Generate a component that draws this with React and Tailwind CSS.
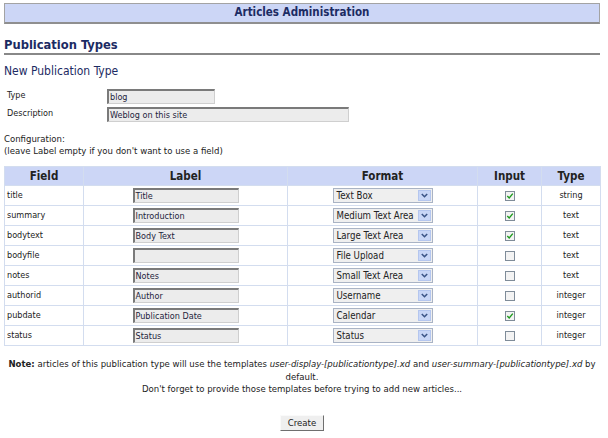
import React from 'react';

const rows = [
  ['title', 'Title', 'Text Box', true, 'string'],
  ['summary', 'Introduction', 'Medium Text Area', true, 'text'],
  ['bodytext', 'Body Text', 'Large Text Area', true, 'text'],
  ['bodyfile', '', 'File Upload', false, 'text'],
  ['notes', 'Notes', 'Small Text Area', false, 'text'],
  ['authorid', 'Author', 'Username', false, 'integer'],
  ['pubdate', 'Publication Date', 'Calendar', true, 'integer'],
  ['status', 'Status', 'Status', false, 'integer'],
];

function TextBox({ value, w }) {
  return (
    <div
      className={`${w} h-[15px] bg-[#ececec] border-t-2 border-l-2 border-b border-r border-t-[#7a7a7a] border-l-[#7a7a7a] border-b-[#cfcfcf] border-r-[#cfcfcf] pl-[1px] leading-[12px] text-left text-[#1e1e3c] whitespace-nowrap overflow-hidden`}
    >
      {value}
    </div>
  );
}

function SelectBox({ value }) {
  return (
    <div className="mx-auto w-[100px] h-[15px] flex items-stretch bg-[#efefef] border border-[#a9b3c4] text-left">
      <span className="flex-1 pl-[3px] leading-[13px] text-[9.6px] text-[#222] whitespace-nowrap overflow-hidden">{value}</span>
      <span className="w-[13px] m-[1px] flex items-center justify-center bg-[#c9d7f7] border border-[#b4c6ef]">
        <svg width="7" height="5" viewBox="0 0 7 5">
          <path d="M0.8 1 L3.5 3.7 L6.2 1" fill="none" stroke="#3d5687" strokeWidth="1.6" />
        </svg>
      </span>
    </div>
  );
}

function Check({ on }) {
  return (
    <span className="mx-auto w-[10px] h-[10px] flex items-center justify-center border border-[#7f8c99] bg-[#f3f3f3]">
      {on && (
        <svg width="8" height="8" viewBox="0 0 8 8">
          <path d="M1.3 4 L3.2 6 L6.8 1.6" fill="none" stroke="#1f9a1f" strokeWidth="1.4" />
        </svg>
      )}
    </span>
  );
}

export default function App() {
  const font = { fontFamily: '"DejaVu Sans Condensed", "Liberation Sans", sans-serif' };
  return (
    <div className="w-[608px] h-[438px] bg-white text-[9px] text-[#222] pt-[3px]" style={font}>
      <div className="ml-[4px] w-[596px]">
        <div className="h-[21px] flex items-center justify-center bg-[#ccd6f6] border-t border-t-[#a3a3a3] border-b-2 border-b-[#8f8f8f] border-x border-x-[#a3a3a3] text-[11.5px] font-bold text-[#1c2b63]">
          Articles Administration
        </div>

        <div className="mt-[13px] h-[18px] leading-[16px] text-[12.8px] font-bold text-[#1c2b63] border-b-2 border-[#888]">
          Publication Types
        </div>

        <div className="mt-[9px] leading-[14px] text-[12px] text-[#1c2b63]">New Publication Type</div>

        <div className="mt-[10px] flex flex-col gap-[2px]">
          <div className="flex items-center h-[16px]">
            <span className="w-[103px] pl-[3px]">Type</span>
            <TextBox value="blog" w="w-[108px]" />
          </div>
          <div className="flex items-center h-[16px]">
            <span className="w-[103px] pl-[3px]">Description</span>
            <TextBox value="Weblog on this site" w="w-[242px]" />
          </div>
        </div>

        <div className="mt-[11px] leading-[12px] text-[9.5px]">
          <div>Configuration:</div>
          <div>(leave Label empty if you don't want to use a field)</div>
        </div>

        <table className="mt-[9px] w-[596px] border-collapse table-fixed">
          <colgroup>
            <col className="w-[79px]" />
            <col className="w-[204px]" />
            <col className="w-[190px]" />
            <col className="w-[64px]" />
            <col className="w-[59px]" />
          </colgroup>
          <thead>
            <tr className="h-[19px] bg-[#ccd6f6] text-[11.5px] font-bold text-[#222]">
              <th className="border border-[#d3ddef] font-bold pt-[1px]">Field</th>
              <th className="border border-[#d3ddef] font-bold pt-[1px]">Label</th>
              <th className="border border-[#d3ddef] font-bold pt-[1px]">Format</th>
              <th className="border border-[#d3ddef] font-bold pt-[1px]">Input</th>
              <th className="border border-[#d3ddef] font-bold pt-[1px]">Type</th>
            </tr>
          </thead>
          <tbody>
            {rows.map(([field, label, format, input, type]) => (
              <tr key={field} className="h-[20px]">
                <td className="border border-[#d3ddef] pl-[2px]">{field}</td>
                <td className="border border-[#d3ddef]">
                  <div className="flex justify-center">
                    <TextBox value={label} w="w-[106px]" />
                  </div>
                </td>
                <td className="border border-[#d3ddef]">
                  <SelectBox value={format} />
                </td>
                <td className="border border-[#d3ddef]">
                  <Check on={input} />
                </td>
                <td className="border border-[#d3ddef] text-center">{type}</td>
              </tr>
            ))}
          </tbody>
        </table>

        <div className="mt-[12px] leading-[12.5px] text-center text-[9.5px]">
          <div className="whitespace-nowrap">
            <b>Note:</b> articles of this publication type will use the templates{' '}
            <i>user-display-[publicationtype].xd</i> and <i>user-summary-[publicationtype].xd</i> by
          </div>
          <div>default.</div>
          <div>Don't forget to provide those templates before trying to add new articles...</div>
        </div>

        <div className="mt-[19px] flex justify-center">
          <button className="w-[44px] h-[16px] bg-[#efefef] border border-t-[#fafafa] border-l-[#fafafa] border-b-[#6f6f6f] border-r-[#6f6f6f] text-[9.5px] text-[#222] leading-[14px]">
            Create
          </button>
        </div>
      </div>
    </div>
  );
}
